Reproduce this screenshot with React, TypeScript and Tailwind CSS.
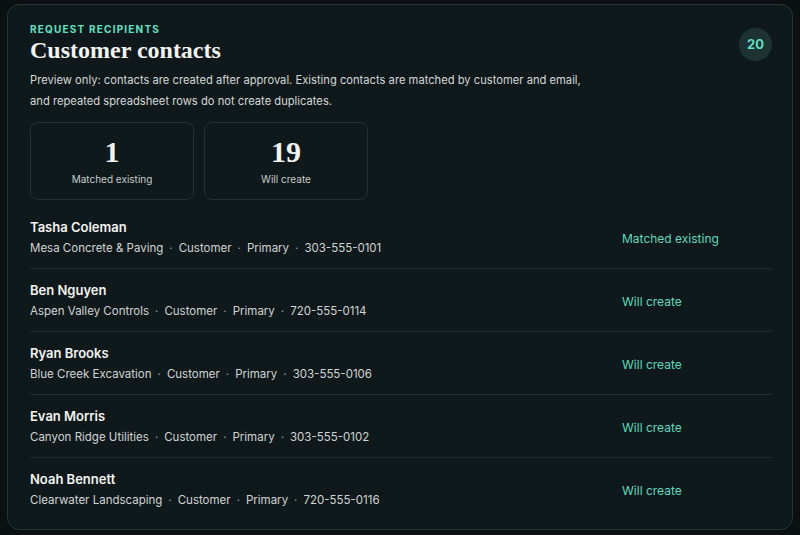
import React from "react"

type Contact = {
  name: string
  company: string
  phone: string
  status: string
}

const contacts: Contact[] = [
  { name: "Tasha Coleman", company: "Mesa Concrete & Paving", phone: "303-555-0101", status: "Matched existing" },
  { name: "Ben Nguyen", company: "Aspen Valley Controls", phone: "720-555-0114", status: "Will create" },
  { name: "Ryan Brooks", company: "Blue Creek Excavation", phone: "303-555-0106", status: "Will create" },
  { name: "Evan Morris", company: "Canyon Ridge Utilities", phone: "303-555-0102", status: "Will create" },
  { name: "Noah Bennett", company: "Clearwater Landscaping", phone: "720-555-0116", status: "Will create" },
]

function Stat(props: { value: string; label: string }) {
  return (
    <div className="w-[164px] h-[78px] rounded-lg border border-[#243134] flex flex-col items-center justify-center">
      <div className="font-['Liberation_Serif',serif] font-bold text-[30px] leading-[34px] text-[#f2f4f3]">
        {props.value}
      </div>
      <div className="text-[10px] leading-4 text-[#c5cccb] mt-[2px]">{props.label}</div>
    </div>
  )
}

function Dot() {
  return <span className="mx-[6px] text-[#9aa3a2]">·</span>
}

export default function App() {
  return (
    <div className="w-[800px] h-[535px] bg-[#0a1113] px-[7px] pt-[4px] font-['Inter',sans-serif]">
      <section className="h-[526px] rounded-xl border border-[#263336] bg-[#0f181b] pl-[22px] pr-[20px] pt-[17px]">
        <div className="flex justify-between">
          <div>
            <p className="text-[10px] leading-[14px] font-bold tracking-[0.12em] text-[#5fe0c2]">
              REQUEST RECIPIENTS
            </p>
            <h1 className="font-['Liberation_Serif',serif] font-bold text-[24px] leading-[30px] text-[#f3f4f2] -mt-[1px]">
              Customer contacts
            </h1>
            <p className="text-[11.2px] leading-[21px] text-[#d3d8d7] max-w-[600px] mt-[5px]">
              Preview only: contacts are created after approval. Existing contacts are matched by customer and email,
              <br />
              and repeated spreadsheet rows do not create duplicates.
            </p>
          </div>
          <div className="mt-[6px] w-[33px] h-[33px] rounded-full bg-[#1c3233] flex items-center justify-center text-[13px] font-bold text-[#62dcc3]">
            20
          </div>
        </div>

        <div className="flex gap-[10px] mt-[10px]">
          <Stat value="1" label="Matched existing" />
          <Stat value="19" label="Will create" />
        </div>

        <div className="mt-[6px]">
          {contacts.map((c, i) => (
            <div
              key={c.name}
              className={
                "flex items-center pt-[11px] pb-[10px] " + (i > 0 ? "border-t border-[#222d30]" : "")
              }
            >
              <div className="flex-1">
                <div className="text-[13px] leading-5 font-semibold text-[#f3f4f2]">{c.name}</div>
                <div className="text-[11.5px] leading-5 text-[#cfd5d4] mt-[1px]">
                  {c.company}
                  <Dot />
                  Customer
                  <Dot />
                  Primary
                  <Dot />
                  {c.phone}
                </div>
              </div>
              <div className="w-[150px] text-[12px] text-[#5fd8bd] mt-[3px]">{c.status}</div>
            </div>
          ))}
        </div>
      </section>
    </div>
  )
}
